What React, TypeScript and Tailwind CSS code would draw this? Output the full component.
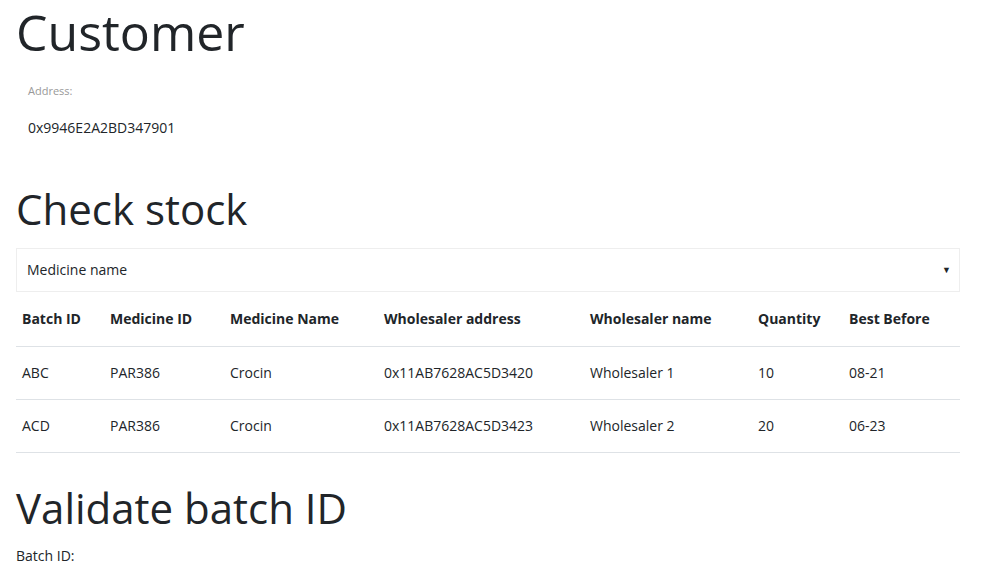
import React from "react";

const rows = [
  {
    batch: "ABC",
    medId: "PAR386",
    name: "Crocin",
    address: "0x11AB7628AC5D3420",
    wholesaler: "Wholesaler 1",
    qty: "10",
    best: "08-21",
  },
  {
    batch: "ACD",
    medId: "PAR386",
    name: "Crocin",
    address: "0x11AB7628AC5D3423",
    wholesaler: "Wholesaler 2",
    qty: "20",
    best: "06-23",
  },
];

const columns = [
  { label: "Batch ID", w: "w-[88px]" },
  { label: "Medicine ID", w: "w-[120px]" },
  { label: "Medicine Name", w: "w-[154px]" },
  { label: "Wholesaler address", w: "w-[206px]" },
  { label: "Wholesaler name", w: "w-[168px]" },
  { label: "Quantity", w: "w-[91px]" },
  { label: "Best Before", w: "" },
];

export default function App() {
  return (
    <div className="min-h-[588px] bg-white pl-4 pr-[21px] font-['Open_Sans',sans-serif] text-[#212529]">
      <h1 className="text-[50px] font-normal leading-[64px]">Customer</h1>

      <div className="px-3 pt-[19px]">
        <div className="text-[11px] leading-4 text-[#999]">Address:</div>
        <div className="mt-[19px] text-sm leading-5">0x9946E2A2BD347901</div>
      </div>

      <h1 className="mt-[43px] text-[42px] font-normal leading-[56px]">Check stock</h1>

      <div className="mt-[11px] flex h-[44px] items-center justify-between border border-[#eee] pl-[10px] pr-2 text-sm">
        <span>Medicine name</span>
        <span className="text-[9px]">▼</span>
      </div>

      <table className="w-full table-fixed border-collapse text-sm">
        <thead>
          <tr className="h-[54px] border-b border-[#dee2e6]">
            {columns.map((c) => (
              <th key={c.label} className={`${c.w} px-[6px] text-left font-bold`}>
                {c.label}
              </th>
            ))}
          </tr>
        </thead>
        <tbody>
          {rows.map((r) => (
            <tr key={r.batch} className="h-[53px] border-b border-[#dee2e6]">
              <td className="px-[6px]">{r.batch}</td>
              <td className="px-[6px]">{r.medId}</td>
              <td className="px-[6px]">{r.name}</td>
              <td className="px-[6px]">{r.address}</td>
              <td className="px-[6px]">{r.wholesaler}</td>
              <td className="px-[6px]">{r.qty}</td>
              <td className="px-[6px]">{r.best}</td>
            </tr>
          ))}
        </tbody>
      </table>

      <h1 className="mt-[27px] text-[42px] font-normal leading-[56px]">Validate batch ID</h1>
      <div className="mt-[10px] text-sm leading-5">Batch ID:</div>
    </div>
  );
}
